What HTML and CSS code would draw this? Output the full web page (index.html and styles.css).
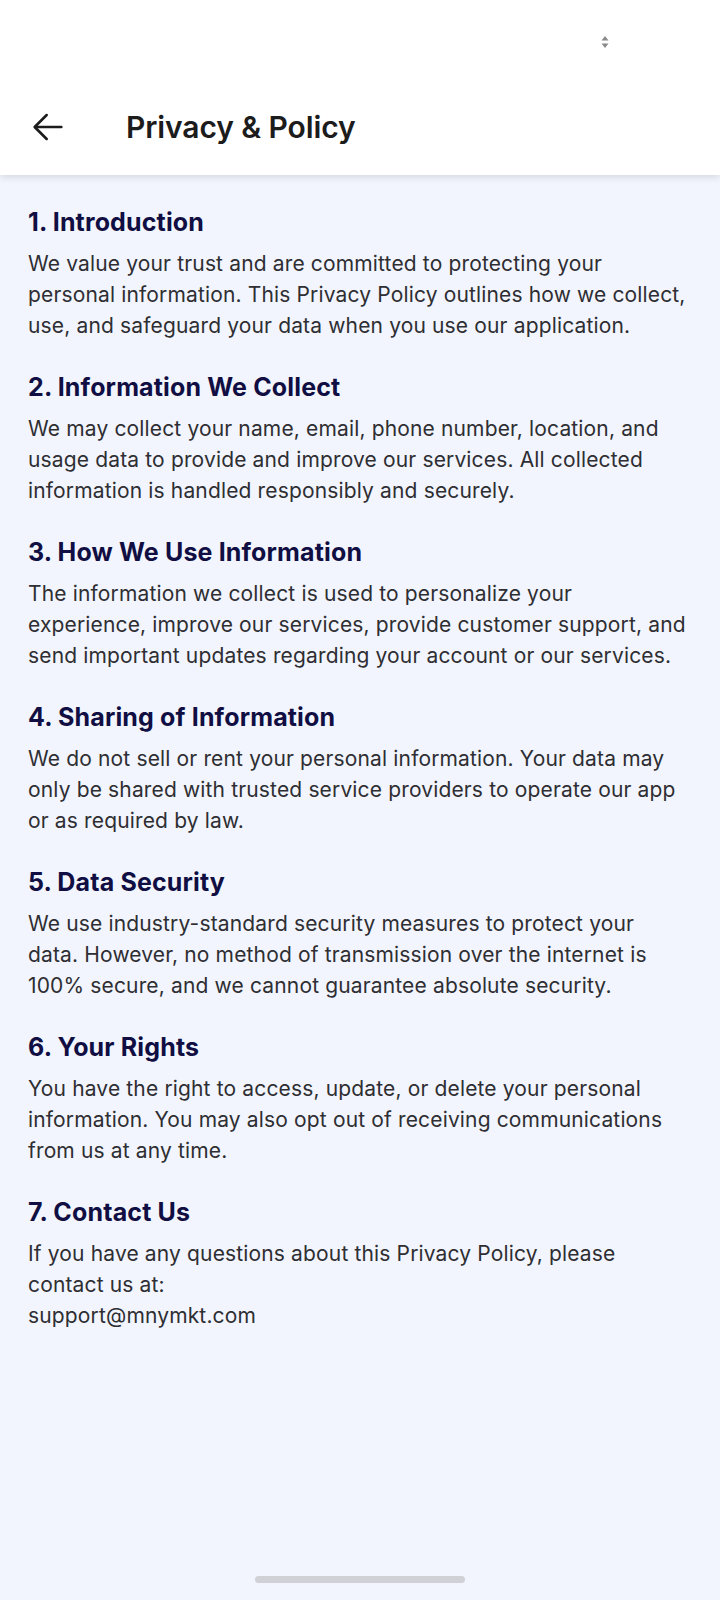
FILE: index.html
```html
<!DOCTYPE html>
<html lang="en">
<head>
<meta charset="utf-8">
<title>Privacy &amp; Policy</title>
<link rel="stylesheet" href="styles.css">
</head>
<body>
<div class="page">
  <header class="header">
    <div class="statusbar">
      <svg class="status-icon" width="8" height="12" viewBox="0 0 8 12"><path d="M4 0L7.5 4.5H0.5Z M4 12L7.5 7.5H0.5Z" fill="#8a8a8a"/></svg>
    </div>
    <div class="appbar">
      <svg class="back" width="40" height="40" viewBox="0 0 24 24" fill="none" stroke="#1c1c1c" stroke-width="1.55" stroke-linecap="round" stroke-linejoin="round"><path d="M20 12H4.3"/><path d="M11.2 4.8L4 12l7.2 7.2"/></svg>
      <h1 class="title">Privacy &amp; Policy</h1>
    </div>
  </header>
  <main class="content">
    <section class="sec">
      <h2>1. Introduction</h2>
      <p>We value your trust and are committed to protecting your personal information. This Privacy Policy outlines how we collect, use, and safeguard your data when you use our application.</p>
    </section>
    <section class="sec">
      <h2>2. Information We Collect</h2>
      <p>We may collect your name, email, phone number, location, and usage data to provide and improve our services. All collected information is handled responsibly and securely.</p>
    </section>
    <section class="sec">
      <h2>3. How We Use Information</h2>
      <p>The information we collect is used to personalize your experience, improve our services, provide customer support, and send important updates regarding your account or our services.</p>
    </section>
    <section class="sec">
      <h2>4. Sharing of Information</h2>
      <p>We do not sell or rent your personal information. Your data may only be shared with trusted service providers to operate our app or as required by law.</p>
    </section>
    <section class="sec">
      <h2>5. Data Security</h2>
      <p>We use industry-standard security measures to protect your data. However, no method of transmission over the internet is 100% secure, and we cannot guarantee absolute security.</p>
    </section>
    <section class="sec">
      <h2>6. Your Rights</h2>
      <p>You have the right to access, update, or delete your personal information. You may also opt out of receiving communications from us at any time.</p>
    </section>
    <section class="sec">
      <h2>7. Contact Us</h2>
      <p>If you have any questions about this Privacy Policy, please contact us at:<br>support@mnymkt.com</p>
    </section>
  </main>
  <div class="homebar"><span class="handle"></span></div>
</div>
</body>
</html>
```
FILE: styles.css
```css
* { box-sizing: border-box; }
html, body { margin: 0; padding: 0; }
body {
  background: #f2f5fd;
  font-family: Inter, "Noto Sans", sans-serif;
  -webkit-font-smoothing: antialiased;
}
.page {
  min-height: 1600px;
  display: flex;
  flex-direction: column;
}
.header {
  background: #ffffff;
  box-shadow: 0 2px 8px rgba(0, 0, 0, 0.13);
  position: relative;
  z-index: 1;
}
.statusbar {
  height: 78px;
  display: flex;
  justify-content: flex-end;
  align-items: flex-start;
  padding: 36px 111px 0 0;
}
.appbar {
  height: 97px;
  display: flex;
  align-items: center;
  padding-left: 28px;
  gap: 58px;
}
.back { display: block; flex: none; }
.title {
  margin: 0;
  font-size: 30px;
  font-weight: 600;
  color: #1c1c1c;
  letter-spacing: -0.1px;
}
.content {
  flex: 1;
  padding: 31px 33px 0 28px;
  display: flex;
  flex-direction: column;
  gap: 30px;
}
.sec h2 {
  margin: 0 0 10px 0;
  font-size: 25px;
  line-height: 32px;
  font-weight: 700;
  color: #100e42;
  letter-spacing: 0.15px;
}
.sec p {
  margin: 0;
  font-size: 21px;
  line-height: 31px;
  color: #2e2e33;
  letter-spacing: 0.15px;
}
.homebar {
  display: flex;
  justify-content: center;
  padding-bottom: 17px;
}
.handle {
  width: 210px;
  height: 7px;
  border-radius: 4px;
  background: #d0d1d6;
}
```
